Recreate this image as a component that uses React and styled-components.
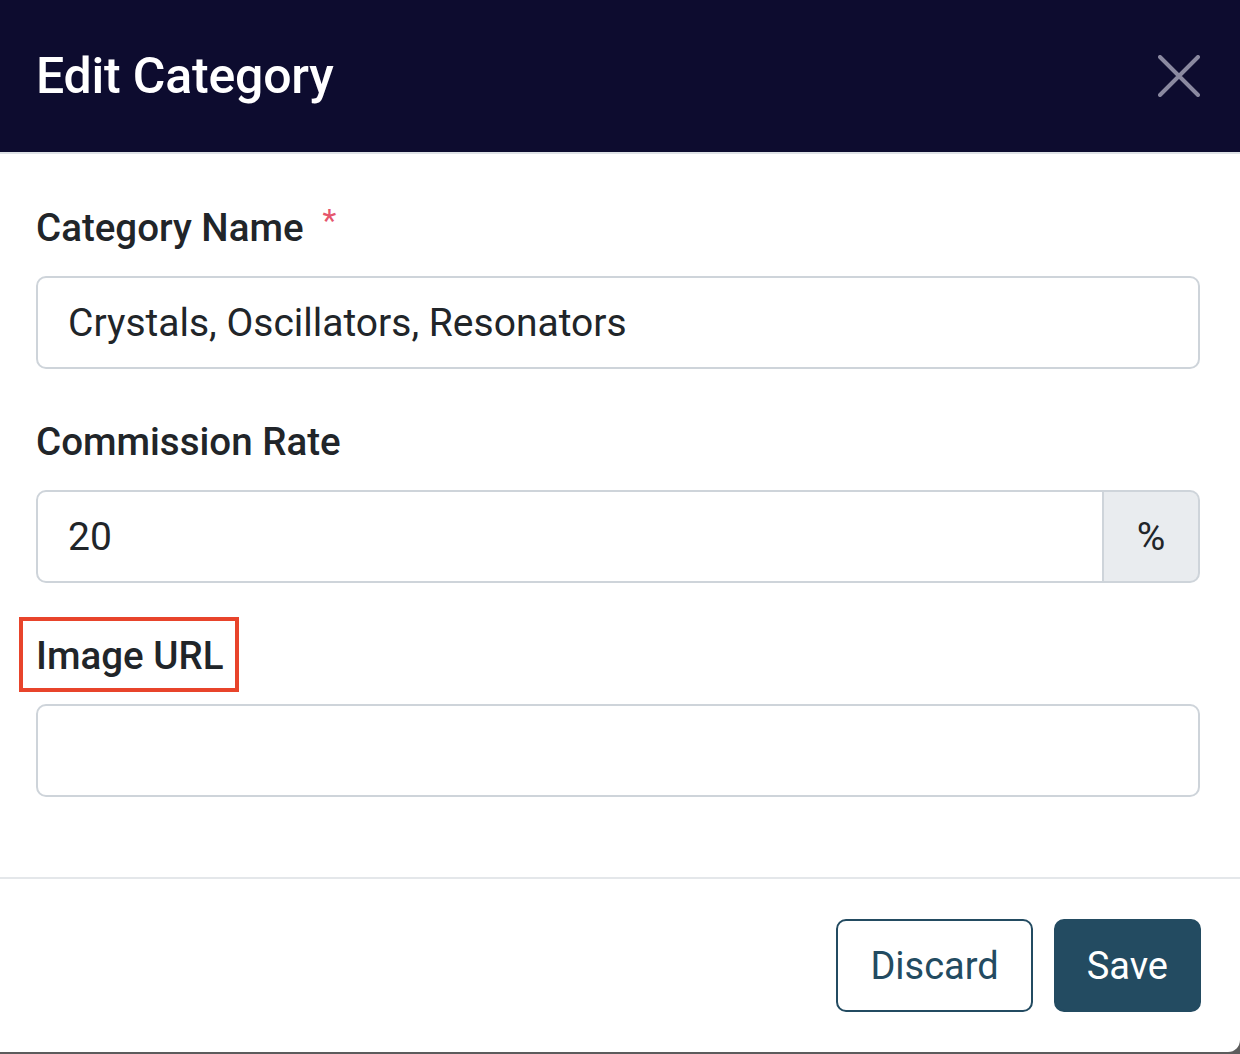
import React from 'react';
import styled, { createGlobalStyle } from 'styled-components';

const GlobalStyle = createGlobalStyle`
  html, body {
    margin: 0;
    padding: 0;
    background: #5c5c5c;
  }
  body {
    font-family: Roboto, "Liberation Sans", sans-serif;
  }
`;

const Modal = styled.div`
  width: 1240px;
  height: 1052px;
  display: flex;
  flex-direction: column;
  background: #fff;
  border-bottom-right-radius: 12px;
  overflow: hidden;
`;

const Header = styled.header`
  box-sizing: border-box;
  height: 154px;
  flex-shrink: 0;
  display: flex;
  align-items: center;
  justify-content: space-between;
  padding: 0 40px 0 36px;
  background: #0d0c2f;
  border-bottom: 2px solid #dee2e6;
`;

const Title = styled.h1`
  margin: 0;
  font-size: 50px;
  font-weight: 500;
  color: #fff;
  letter-spacing: -0.2px;
`;

const CloseButton = styled.button`
  display: flex;
  padding: 0;
  border: 0;
  background: none;
  cursor: pointer;
`;

const Body = styled.div`
  flex: 1;
  padding: 44px 40px 0 36px;
  display: flex;
  flex-direction: column;
  gap: 43px;
  border-bottom: 2px solid #e4e7ea;
`;

const Field = styled.div`
  display: flex;
  flex-direction: column;
  align-items: flex-start;
  gap: 18px;
`;

const Label = styled.label`
  position: relative;
  font-size: 38.5px;
  line-height: 60px;
  font-weight: 500;
  color: #212529;

  ${({ $highlighted }) =>
    $highlighted &&
    `
    &::after {
      content: '';
      position: absolute;
      top: -9px;
      bottom: -6px;
      left: -17px;
      right: -16px;
      border: 4px solid #e8442b;
    }
  `}
`;

const Required = styled.span`
  color: #e5566d;
  margin-left: 19px;
  font-size: 32px;
  font-weight: 400;
  vertical-align: top;
  position: relative;
  top: -8px;
`;

const TextInput = styled.input`
  box-sizing: border-box;
  width: 100%;
  height: 93px;
  padding: 0 30px;
  border: 2px solid #ced4da;
  border-radius: ${({ $grouped }) => ($grouped ? '10px 0 0 10px' : '10px')};
  font-family: inherit;
  font-size: 39px;
  color: #212529;
  background: #fff;
  outline: none;
`;

const InputGroup = styled.div`
  display: flex;
  width: 100%;
`;

const Addon = styled.span`
  box-sizing: border-box;
  width: 96px;
  height: 93px;
  flex-shrink: 0;
  display: flex;
  align-items: center;
  justify-content: center;
  background: #e9ecef;
  border: 2px solid #ced4da;
  border-left: 0;
  border-radius: 0 10px 10px 0;
  font-size: 39px;
  color: #212529;
`;

const Footer = styled.footer`
  box-sizing: border-box;
  height: 173px;
  flex-shrink: 0;
  display: flex;
  align-items: center;
  justify-content: flex-end;
  gap: 21px;
  padding: 0 39px;
`;

const Button = styled.button`
  box-sizing: border-box;
  height: 93px;
  padding: 0 ${({ $variant }) => ($variant === 'primary' ? '31px' : '32px')};
  border: 2px solid #234b61;
  border-radius: 10px;
  background: ${({ $variant }) => ($variant === 'primary' ? '#234b61' : '#fff')};
  color: ${({ $variant }) => ($variant === 'primary' ? '#fff' : '#234b61')};
  font-family: inherit;
  font-size: 38px;
  cursor: pointer;
`;

const CloseIcon = () => (
  <svg width="42" height="42" viewBox="0 0 42 42" fill="none">
    <path
      d="M2 2L40 40M40 2L2 40"
      stroke="#8a89a0"
      strokeWidth="4"
      strokeLinecap="round"
    />
  </svg>
);

export default function App() {
  return (
    <>
      <GlobalStyle />
      <Modal>
        <Header>
          <Title>Edit Category</Title>
          <CloseButton aria-label="Close">
            <CloseIcon />
          </CloseButton>
        </Header>
        <Body>
          <Field>
            <Label>
              Category Name<Required>*</Required>
            </Label>
            <TextInput defaultValue="Crystals, Oscillators, Resonators" />
          </Field>
          <Field>
            <Label>Commission Rate</Label>
            <InputGroup>
              <TextInput $grouped defaultValue="20" />
              <Addon>%</Addon>
            </InputGroup>
          </Field>
          <Field>
            <Label $highlighted>Image URL</Label>
            <TextInput />
          </Field>
        </Body>
        <Footer>
          <Button>Discard</Button>
          <Button $variant="primary">Save</Button>
        </Footer>
      </Modal>
    </>
  );
}
